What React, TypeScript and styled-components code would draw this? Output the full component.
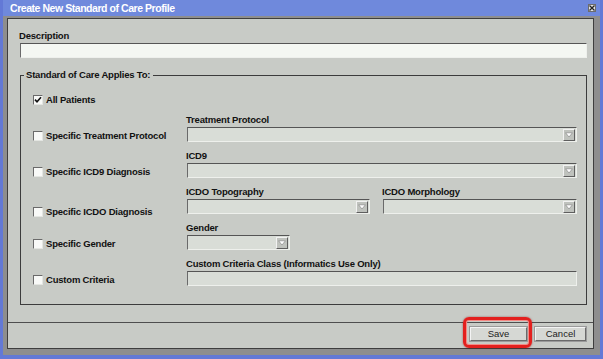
import React from "react";
import styled, { createGlobalStyle } from "styled-components";

const Global = createGlobalStyle`
  html, body { margin: 0; padding: 0; background: #6f89dc; }
  * { box-sizing: border-box; }
`;

const Window = styled.div`
  width: 603px;
  height: 359px;
  background: #6f89dc;
  border: solid #6379d6;
  border-width: 0 3px 4px 3px;
  display: flex;
  flex-direction: column;
  font-family: "Liberation Sans", Arial, sans-serif;
`;

const TitleBar = styled.div`
  height: 16px;
  flex: none;
  display: flex;
  align-items: center;
  justify-content: space-between;
  padding: 0 4px 0 7px;
`;

const Title = styled.span`
  color: #ffffff;
  font-size: 10.5px;
  font-weight: bold;
  letter-spacing: -0.45px;
  line-height: 16px;
`;

const CloseBox = styled.span`
  width: 8px;
  height: 8px;
  background: #e2e2e2;
  border: 1px solid #6c6c6c;
  display: flex;
  align-items: center;
  justify-content: center;
`;

const Frame = styled.div`
  flex: 1;
  display: flex;
  background: #8e8e8e;
  padding: 2px 6px 6px 4px;
`;

const Panel = styled.div`
  flex: 1;
  display: flex;
  flex-direction: column;
  background: #c8cbc6;
  border: 1px solid #3e3e3e;
`;

const Content = styled.div`
  flex: 1;
  padding: 11px 6px 0 12px;
  display: flex;
  flex-direction: column;
`;

const Label = styled.div`
  font-size: 9.5px;
  font-weight: bold;
  letter-spacing: -0.2px;
  line-height: 12px;
  color: #111;
  margin: 0 0 1px -1px;
  white-space: nowrap;
`;

const TextInput = styled.div<{ $light?: boolean }>`
  height: 15px;
  background: ${(p) => (p.$light ? "#f4f7f2" : "#d9ddd7")};
  border-top: 1px solid #555;
  border-left: 1px solid #6a6a6a;
  border-bottom: 1px solid #eef0ec;
  border-right: 1px solid #eef0ec;
`;

const Group = styled.fieldset`
  margin: 11px 0 0 0;
  padding: 13px 9px 18px 12px;
  border: 1px solid #3c3c3c;
  display: flex;
  flex-direction: column;
  gap: 8px;
  min-width: 0;
`;

const Legend = styled.legend`
  font-size: 9.5px;
  font-weight: bold;
  letter-spacing: -0.2px;
  line-height: 12px;
  color: #111;
  padding: 0 3px 0 2px;
  margin-left: -9px;
`;

const AllRow = styled.div`
  height: 12px;
  display: flex;
  align-items: center;
`;

const CheckLabel = styled.label<{ $shift?: number }>`
  display: flex;
  align-items: center;
  gap: 3px;
  font-size: 9.5px;
  font-weight: bold;
  letter-spacing: -0.2px;
  line-height: 12px;
  color: #111;
  white-space: nowrap;
  align-self: end;
  transform: translateY(${(p) => p.$shift ?? 0}px);
`;

const Box = styled.span`
  width: 10px;
  height: 10px;
  flex: none;
  background: #f8f9f7;
  border-top: 1px solid #6a6a6a;
  border-left: 1px solid #6a6a6a;
  border-bottom: 1px solid #e4e6e2;
  border-right: 1px solid #e4e6e2;
  display: flex;
  align-items: center;
  justify-content: center;
`;

const CriteriaRow = styled.div`
  display: grid;
  grid-template-columns: 154px 1fr;
  height: 28px;
`;

const FieldCols = styled.div<{ $cols?: string }>`
  display: grid;
  grid-template-columns: ${(p) => p.$cols ?? "1fr"};
  column-gap: 13px;
`;

const FieldBlock = styled.div`
  display: flex;
  flex-direction: column;
`;

const Select = styled.div<{ $width?: number }>`
  height: 15px;
  width: ${(p) => (p.$width ? `${p.$width}px` : "auto")};
  background: #d9ddd7;
  border-top: 1px solid #555;
  border-left: 1px solid #6a6a6a;
  border-bottom: 1px solid #eef0ec;
  border-right: 1px solid #eef0ec;
  display: flex;
  justify-content: flex-end;
  align-items: center;
  padding-right: 1px;
`;

const ArrowBtn = styled.span`
  width: 12px;
  height: 12px;
  background: #bfc2bd;
  border-top: 1px solid #f2f2f2;
  border-left: 1px solid #f2f2f2;
  border-bottom: 1px solid #5e5e5e;
  border-right: 1px solid #5e5e5e;
  display: flex;
  align-items: center;
  justify-content: center;
`;

const ButtonBar = styled.div`
  height: 26px;
  flex: none;
  border-top: 1px solid #4e4e4e;
  display: flex;
  justify-content: flex-end;
  align-items: flex-start;
  gap: 8px;
  padding: 4px 7px 0 0;
`;

const Button = styled.button<{ $width: number }>`
  width: ${(p) => p.$width}px;
  height: 14px;
  padding: 0;
  background: #d6d8d4;
  border-top: 1px solid #f4f4f4;
  border-left: 1px solid #f4f4f4;
  border-bottom: 1px solid #6a6a6a;
  border-right: 1px solid #6a6a6a;
  outline: 1px solid #9a9a9a;
  font-family: "Liberation Sans", Arial, sans-serif;
  font-size: 9.5px;
  line-height: 12px;
  color: #222;
`;

const Highlight = styled.span`
  position: relative;
  display: flex;
`;

const Ring = styled.span`
  position: absolute;
  left: -7px;
  right: -5px;
  top: -10px;
  bottom: -7px;
  border: 3px solid #e3201e;
  border-radius: 6px;
  box-shadow: 0 0 2px 0 rgba(120, 0, 0, 0.6), inset 0 0 0 1px #f58a85;
  pointer-events: none;
`;

const Check = () => (
  <svg width="8" height="8" viewBox="0 0 8 8">
    <path d="M1 3.6 L3 5.8 L7 1.2" stroke="#111" strokeWidth="1.6" fill="none" />
  </svg>
);

const Arrow = () => (
  <svg width="8" height="6" viewBox="0 0 8 6">
    <path d="M0.6 0.8 H7.4 L4 5 Z" fill="#ffffff" stroke="#8a8a8a" strokeWidth="0.7" />
  </svg>
);

const Checkbox: React.FC<{ label: string; checked?: boolean; shift?: number }> = ({ label, checked, shift }) => (
  <CheckLabel $shift={shift}>
    <Box>{checked && <Check />}</Box>
    {label}
  </CheckLabel>
);

const Dropdown: React.FC<{ width?: number }> = ({ width }) => (
  <Select $width={width}>
    <ArrowBtn>
      <Arrow />
    </ArrowBtn>
  </Select>
);

export default function App() {
  return (
    <>
      <Global />
      <Window>
        <TitleBar>
          <Title>Create New Standard of Care Profile</Title>
          <CloseBox>
            <svg width="6" height="6" viewBox="0 0 6 6">
              <path d="M0.5 0.5 L5.5 5.5 M5.5 0.5 L0.5 5.5" stroke="#222" strokeWidth="1.3" />
            </svg>
          </CloseBox>
        </TitleBar>
        <Frame>
          <Panel>
            <Content>
              <Label>Description</Label>
              <TextInput $light />
              <Group>
                <Legend>Standard of Care Applies To:</Legend>
                <AllRow>
                  <Checkbox label="All Patients" checked />
                </AllRow>
                <CriteriaRow>
                  <Checkbox label="Specific Treatment Protocol" />
                  <FieldBlock>
                    <Label>Treatment Protocol</Label>
                    <Dropdown />
                  </FieldBlock>
                </CriteriaRow>
                <CriteriaRow>
                  <Checkbox label="Specific ICD9 Diagnosis" />
                  <FieldBlock>
                    <Label>ICD9</Label>
                    <Dropdown />
                  </FieldBlock>
                </CriteriaRow>
                <CriteriaRow>
                  <Checkbox label="Specific ICDO Diagnosis" shift={4} />
                  <FieldCols $cols="183px 1fr">
                    <FieldBlock>
                      <Label>ICDO Topography</Label>
                      <Dropdown />
                    </FieldBlock>
                    <FieldBlock>
                      <Label>ICDO Morphology</Label>
                      <Dropdown />
                    </FieldBlock>
                  </FieldCols>
                </CriteriaRow>
                <CriteriaRow>
                  <Checkbox label="Specific Gender" />
                  <FieldBlock>
                    <Label>Gender</Label>
                    <Dropdown width={103} />
                  </FieldBlock>
                </CriteriaRow>
                <CriteriaRow>
                  <Checkbox label="Custom Criteria" />
                  <FieldBlock>
                    <Label>Custom Criteria Class (Informatics Use Only)</Label>
                    <TextInput />
                  </FieldBlock>
                </CriteriaRow>
              </Group>
            </Content>
            <ButtonBar>
              <Highlight>
                <Button $width={57}>Save</Button>
                <Ring />
              </Highlight>
              <Button $width={51}>Cancel</Button>
            </ButtonBar>
          </Panel>
        </Frame>
      </Window>
    </>
  );
}
